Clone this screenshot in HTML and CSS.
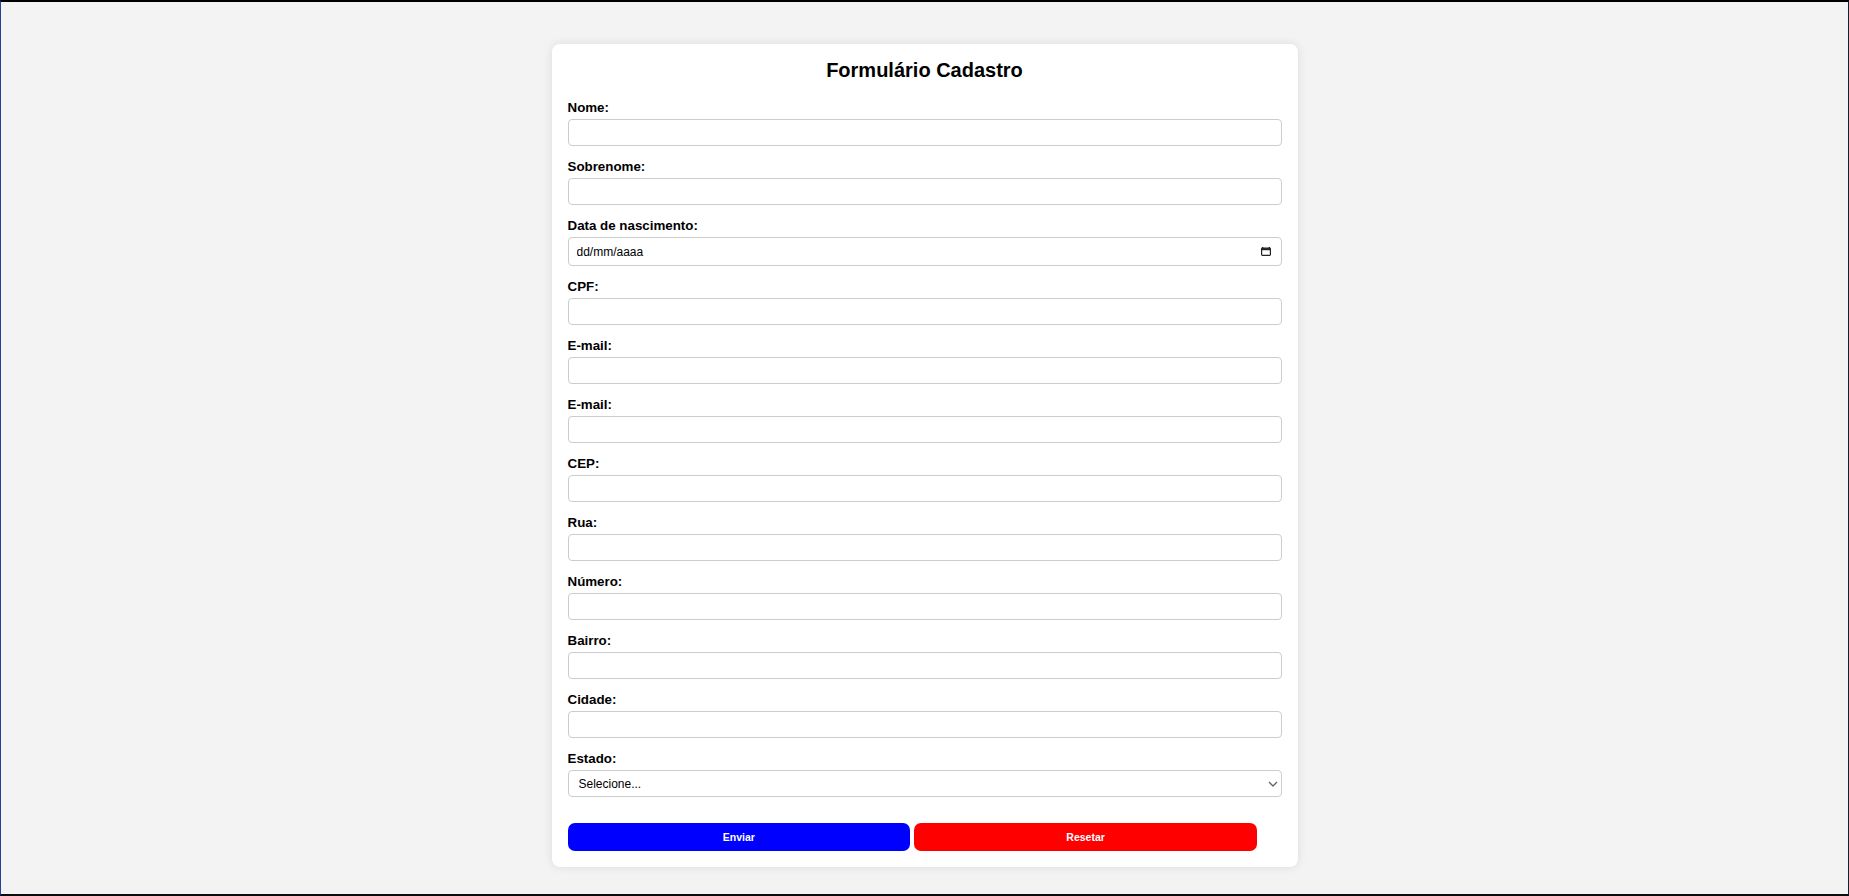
FILE: index.html
```html
<!DOCTYPE html>
<html lang="pt-BR">
<head>
<meta charset="utf-8">
<title>Formulário Cadastro</title>
<link rel="stylesheet" href="styles.css">
</head>
<body>
<div class="frame"></div>
<form class="card">
  <h2 class="title">Formulário Cadastro</h2>

  <div class="field">
    <label class="label" for="nome">Nome:</label>
    <input class="input" id="nome" type="text">
  </div>
  <div class="field">
    <label class="label" for="sobrenome">Sobrenome:</label>
    <input class="input" id="sobrenome" type="text">
  </div>
  <div class="field">
    <label class="label" for="nasc">Data de nascimento:</label>
    <div class="date-box">
      <input class="date-input" id="nasc" type="text" placeholder="dd/mm/aaaa">
      <svg class="cal-icon" width="10" height="10" viewBox="0 0 10 10" aria-hidden="true">
        <rect x="1" y="1" width="1.3" height="1.5" fill="#222"/>
        <rect x="7.7" y="1" width="1.3" height="1.5" fill="#222"/>
        <rect x="0.6" y="2.2" width="8.8" height="7.2" rx="0.8" fill="none" stroke="#222" stroke-width="1.2"/>
        <rect x="0.6" y="2.2" width="8.8" height="2" fill="#222"/>
      </svg>
    </div>
  </div>
  <div class="field">
    <label class="label" for="cpf">CPF:</label>
    <input class="input" id="cpf" type="text">
  </div>
  <div class="field">
    <label class="label" for="email">E-mail:</label>
    <input class="input" id="email" type="text">
  </div>
  <div class="field">
    <label class="label" for="email2">E-mail:</label>
    <input class="input" id="email2" type="text">
  </div>
  <div class="field">
    <label class="label" for="cep">CEP:</label>
    <input class="input" id="cep" type="text">
  </div>
  <div class="field">
    <label class="label" for="rua">Rua:</label>
    <input class="input" id="rua" type="text">
  </div>
  <div class="field">
    <label class="label" for="numero">Número:</label>
    <input class="input" id="numero" type="text">
  </div>
  <div class="field">
    <label class="label" for="bairro">Bairro:</label>
    <input class="input" id="bairro" type="text">
  </div>
  <div class="field">
    <label class="label" for="cidade">Cidade:</label>
    <input class="input" id="cidade" type="text">
  </div>
  <div class="field field-last">
    <label class="label" for="estado">Estado:</label>
    <div class="select-box">
      <select class="select" id="estado">
        <option>Selecione...</option>
      </select>
      <svg class="chevron" width="10" height="6" viewBox="0 0 10 6" aria-hidden="true">
        <path d="M1 1 L5 5 L9 1" fill="none" stroke="#666" stroke-width="1.4"/>
      </svg>
    </div>
  </div>

  <div class="buttons">
    <button type="submit" class="btn btn-send">Enviar</button>
    <button type="reset" class="btn btn-reset">Resetar</button>
  </div>
</form>
</body>
</html>
```

FILE: styles.css
```css
* {
  box-sizing: border-box;
}

html, body {
  margin: 0;
  padding: 0;
}

body {
  background: #f3f3f3;
  font-family: "Liberation Sans", Arial, sans-serif;
  color: #000;
  padding: 44px 0 0;
  min-height: 896px;
}

.frame {
  position: fixed;
  inset: 0;
  border-top: 2px solid #000;
  border-bottom: 2px solid #0b0b12;
  border-left: 1px solid #2a3f9c;
  border-right: 1px solid #1a1d2a;
  pointer-events: none;
}

.card {
  width: 746px;
  margin: 0 auto;
  background: #fff;
  border-radius: 8px;
  box-shadow: 0 0 10px rgba(0, 0, 0, 0.1);
  padding: 15px 16px 16px 16px;
}

.title {
  margin: 0 0 18px;
  font-size: 20px;
  line-height: 23px;
  font-weight: bold;
  text-align: center;
}

.field {
  display: flex;
  flex-direction: column;
  margin-bottom: 13px;
}

.field-last {
  margin-bottom: 0;
}

.label {
  font-size: 13.33px;
  line-height: 15px;
  font-weight: bold;
  margin-bottom: 4px;
}

.input {
  height: 27px;
  width: 100%;
  border: 1px solid #ccc;
  border-radius: 4px;
  padding: 0 8px;
  font-family: "Liberation Sans", Arial, sans-serif;
  font-size: 12px;
  background: #fff;
  outline: none;
}

.date-box {
  height: 29px;
  display: flex;
  align-items: center;
  border: 1px solid #ccc;
  border-radius: 4px;
  padding: 0 10px 0 8px;
  background: #fff;
}

.date-input {
  flex: 1;
  border: none;
  outline: none;
  padding: 0;
  font-family: "Liberation Sans", Arial, sans-serif;
  font-size: 12px;
  color: #000;
  background: transparent;
}

.date-input::placeholder {
  color: #000;
  opacity: 1;
}

.cal-icon {
  flex: none;
  margin-top: -1px;
}

.select-box {
  position: relative;
}

.select {
  appearance: none;
  -webkit-appearance: none;
  width: 100%;
  height: 27px;
  border: 1px solid #ccc;
  border-radius: 4px;
  padding: 0 10px;
  font-family: "Liberation Sans", Arial, sans-serif;
  font-size: 12px;
  color: #000;
  background: #fff;
  outline: none;
}

.chevron {
  position: absolute;
  right: 4px;
  top: 11px;
  pointer-events: none;
}

.buttons {
  display: flex;
  gap: 4px;
  margin-top: 26px;
}

.btn {
  width: 48%;
  height: 28px;
  border: none;
  border-radius: 7px;
  color: #fff;
  font-family: "Liberation Sans", Arial, sans-serif;
  font-size: 10.5px;
  font-weight: bold;
  cursor: pointer;
  padding: 0;
}

.btn-send {
  background: #0000ff;
}

.btn-reset {
  background: #ff0000;
}
```
